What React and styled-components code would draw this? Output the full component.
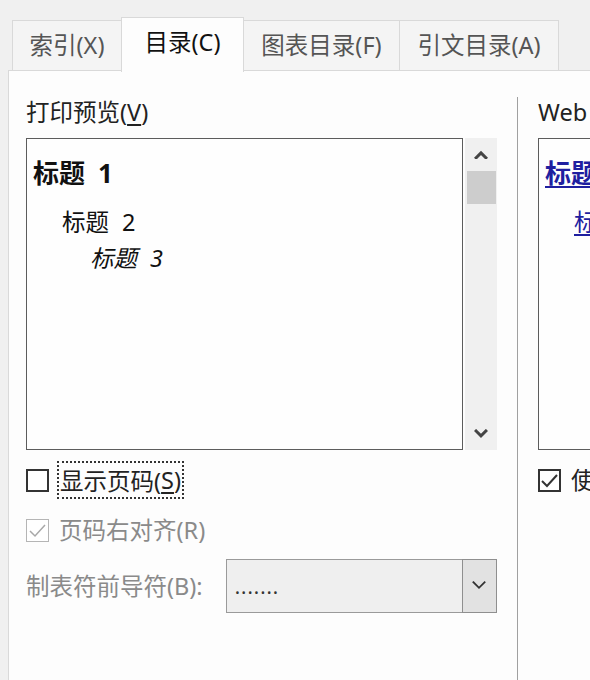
import React from "react";
import styled, { createGlobalStyle } from "styled-components";

const Global = createGlobalStyle`
  html, body { margin: 0; padding: 0; background: #f0f0f0; }
  body { font-family: "Noto Sans", "Noto Sans CJK SC", sans-serif; }
  * { box-sizing: border-box; }
`;

const Frame = styled.div`
  width: 590px;
  height: 680px;
  overflow: hidden;
  display: flex;
  flex-direction: column;
  background: #f0f0f0;
  font-family: "Noto Sans", "Noto Sans CJK SC", sans-serif;
  font-size: 23.5px;
  color: #222;
`;

const TabStrip = styled.div`
  height: 71px;
  display: flex;
  align-items: flex-end;
  padding-left: 12px;
  position: relative;
  z-index: 1;
`;

const Tab = styled.div`
  width: ${(p) => p.$w}px;
  height: ${(p) => (p.$active ? 55 : 51)}px;
  display: flex;
  align-items: center;
  justify-content: center;
  padding-bottom: ${(p) => (p.$active ? 8 : 4)}px;
  background: ${(p) => (p.$active ? "#fdfdfd" : "#f4f4f4")};
  border: 1px solid #d9d9d9;
  border-bottom: ${(p) => (p.$active ? "none" : "1px solid #d9d9d9")};
  margin-left: ${(p) => (p.$first ? 0 : -1)}px;
  margin-bottom: ${(p) => (p.$active ? -1 : 0)}px;
  color: ${(p) => (p.$active ? "#111" : "#555")};
  white-space: nowrap;
  position: relative;
  z-index: ${(p) => (p.$active ? 2 : 1)};
`;

const Panel = styled.div`
  flex: 1;
  margin-left: 8px;
  margin-top: -1px;
  border-left: 1px solid #d9d9d9;
  border-top: 1px solid #d9d9d9;
  background: #fdfdfd;
  display: flex;
`;

const LeftCol = styled.div`
  width: 508px;
  flex: none;
  padding: 27px 0 0 17px;
  display: flex;
  flex-direction: column;
`;

const Divider = styled.div`
  width: 1px;
  flex: none;
  margin-top: 26px;
  background: #a0a0a0;
`;

const RightCol = styled.div`
  flex: 1;
  padding: 27px 0 0 20px;
  display: flex;
  flex-direction: column;
  overflow: hidden;
`;

const Label = styled.div`
  height: 28px;
  line-height: 28px;
  white-space: nowrap;
  color: ${(p) => (p.$disabled ? "#8a8a8a" : "#222")};
`;

const U = styled.span`
  text-decoration: underline;
  text-underline-offset: 3px;
`;

const PreviewRow = styled.div`
  margin-top: 12px;
  height: 312px;
  display: flex;
  gap: 2px;
`;

const ListBox = styled.div`
  width: ${(p) => (p.$w ? `${p.$w}px` : "auto")};
  min-width: ${(p) => (p.$w ? "0" : "200px")};
  height: 100%;
  border: 1px solid #5c5c5c;
  border-right: ${(p) => (p.$open ? "none" : "1px solid #5c5c5c")};
  background: #fefefe;
  padding: 18px 0 0 6px;
  display: flex;
  flex-direction: column;
`;

const Heading = styled.div`
  height: ${(p) => p.$h}px;
  line-height: 32px;
  padding-left: ${(p) => p.$indent}px;
  font-size: ${(p) => p.$size}px;
  font-weight: ${(p) => (p.$bold ? 700 : 400)};
  font-style: ${(p) => (p.$italic ? "italic" : "normal")};
  color: ${(p) => p.$color || "#111"};
  white-space: nowrap;
  font-family: "Noto Sans", "Noto Sans CJK SC", sans-serif;
`;

const Num = styled.span`
  margin-left: 13px;
`;

const Link = styled.span`
  text-decoration: underline;
  text-underline-offset: 3px;
`;

const ScrollBar = styled.div`
  width: 32px;
  height: 100%;
  background: #f0f0f0;
  display: flex;
  flex-direction: column;
  align-items: center;
`;

const ScrollBtn = styled.div`
  width: 32px;
  height: 33px;
  display: flex;
  align-items: center;
  justify-content: center;
  flex: none;
`;

const Thumb = styled.div`
  width: 29px;
  height: 33px;
  background: #cdcdcd;
  flex: none;
`;

const Track = styled.div`
  flex: 1;
`;

const CheckRow = styled.div`
  margin-top: ${(p) => p.$mt}px;
  height: ${(p) => p.$h}px;
  display: flex;
  align-items: center;
  gap: ${(p) => p.$gap}px;
`;

const Box = styled.div`
  width: 23px;
  height: 23px;
  flex: none;
  border: ${(p) => (p.$disabled ? "1px solid #b5b5b5" : "2px solid #333")};
  background: #fff;
  display: flex;
  align-items: center;
  justify-content: center;
`;

const FocusLabel = styled.div`
  height: 38px;
  padding: 0 3px;
  display: flex;
  align-items: center;
  outline: 2px dotted #333;
  outline-offset: -2px;
  white-space: nowrap;
  color: #222;
`;

const LeaderRow = styled.div`
  margin-top: 14px;
  display: flex;
  align-items: center;
  gap: 23px;
`;

const Select = styled.div`
  width: 271px;
  height: 54px;
  display: flex;
  border: 1px solid #9a9a9a;
  background: #efefef;
`;

const SelectValue = styled.div`
  flex: 1;
  padding-left: 8px;
  display: flex;
  align-items: center;
  color: #333;
  letter-spacing: 1px;
  font-size: 20px;
`;

const DropBtn = styled.div`
  width: 35px;
  flex: none;
  border: 1px solid #8f8f8f;
  margin: -1px -1px -1px 0;
  background: #e2e2e2;
  display: flex;
  align-items: center;
  justify-content: center;
`;

const Check = ({ color = "#333", w = 2 }) => (
  <svg width="19" height="19" viewBox="0 0 19 19">
    <path d="M2 10 L7 15 L17 4" fill="none" stroke={color} strokeWidth={w} />
  </svg>
);

const Chevron = ({ up, color = "#444", w = 3, size = 14 }) => (
  <svg width={size} height={size * 0.7} viewBox="0 0 14 10">
    <path
      d={up ? "M2 8 L7 3 L12 8" : "M2 2 L7 7 L12 2"}
      fill="none"
      stroke={color}
      strokeWidth={w}
      strokeLinecap="square"
    />
  </svg>
);

const tabs = [
  { t: "索引(X)", w: 110 },
  { t: "目录(C)", w: 123, active: true },
  { t: "图表目录(F)", w: 157 },
  { t: "引文目录(A)", w: 160 },
];

export default function App() {
  return (
    <Frame>
      <Global />
      <TabStrip>
        {tabs.map((tb, i) => (
          <Tab key={tb.t} $w={tb.w} $active={tb.active} $first={i === 0}>
            {tb.t}
          </Tab>
        ))}
      </TabStrip>
      <Panel>
        <LeftCol>
          <Label>
            打印预览(<U>V</U>)
          </Label>
          <PreviewRow>
            <ListBox $w={437}>
              <Heading $h={49} $indent={0} $size={26} $bold>
                标题<Num>1</Num>
              </Heading>
              <Heading $h={36} $indent={29} $size={23.5}>
                标题<Num>2</Num>
              </Heading>
              <Heading $h={30} $indent={57} $size={23.5} $italic>
                标题<Num>3</Num>
              </Heading>
            </ListBox>
            <ScrollBar>
              <ScrollBtn>
                <Chevron up />
              </ScrollBtn>
              <Thumb />
              <Track />
              <ScrollBtn>
                <Chevron />
              </ScrollBtn>
            </ScrollBar>
          </PreviewRow>
          <CheckRow $mt={11} $h={38} $gap={8}>
            <Box />
            <FocusLabel>
              显示页码(<U>S</U>)
            </FocusLabel>
          </CheckRow>
          <CheckRow $mt={16} $h={30} $gap={10}>
            <Box $disabled>
              <Check color="#a8a8a8" w={1.5} />
            </Box>
            <Label $disabled>页码右对齐(R)</Label>
          </CheckRow>
          <LeaderRow>
            <Label $disabled>制表符前导符(B):</Label>
            <Select>
              <SelectValue>.......</SelectValue>
              <DropBtn>
                <Chevron color="#333" w={1.6} size={16} />
              </DropBtn>
            </Select>
          </LeaderRow>
        </LeftCol>
        <Divider />
        <RightCol>
          <Label>Web 预览(W)</Label>
          <PreviewRow>
            <ListBox $open>
              <Heading $h={49} $indent={0} $size={26} $bold $color="#1f1fa0">
                <Link>标题 1</Link>
              </Heading>
              <Heading $h={36} $indent={29} $size={23.5} $color="#1f1fa0">
                <Link>标题 2</Link>
              </Heading>
            </ListBox>
          </PreviewRow>
          <CheckRow $mt={15} $h={30} $gap={10}>
            <Box>
              <Check />
            </Box>
            <Label>使用超链接而不使用页码(H)</Label>
          </CheckRow>
        </RightCol>
      </Panel>
    </Frame>
  );
}
